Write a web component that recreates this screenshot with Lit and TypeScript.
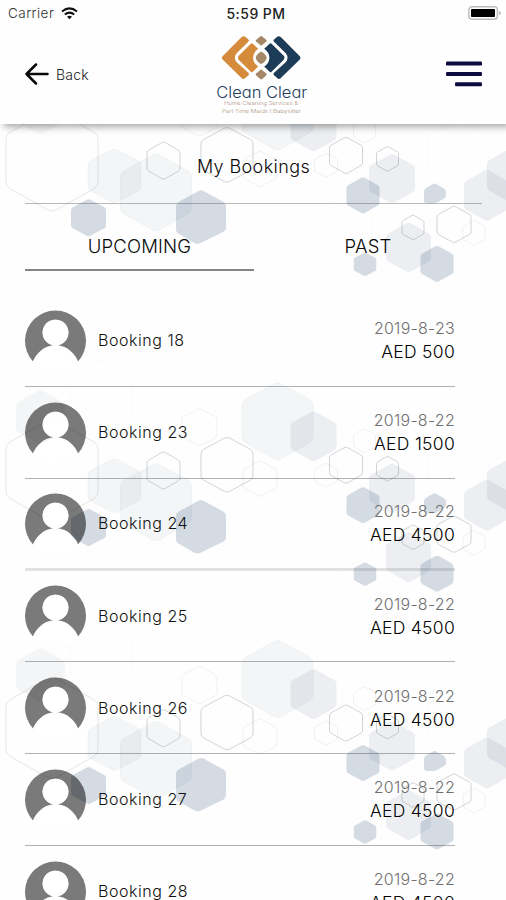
import { LitElement, html, css, svg } from "lit";
import { customElement } from "lit/decorators.js";

type Hex = [cx: number, cy: number, w: number, h: number, kind: string];

// One tile of the honeycomb backdrop: centre, size and tone of each cell.
const HEXES: Hex[] = [
  [40.5, 675, 49, 55, "pale"],
  [101, 655, 62, 76, "ghost"],
  [52, 728, 92, 104, "faint"],
  [114.5, 743.5, 53, 55, "light"],
  [156, 760, 71, 79, "light"],
  [163.5, 728.2, 33, 38, "line"],
  [88.5, 785.4, 35, 38, "dark"],
  [227, 722.5, 52, 56, "line"],
  [260, 736.5, 34, 36, "thin"],
  [199.5, 685, 35, 38, "thin"],
  [277.5, 679, 71, 79, "light"],
  [313.5, 694, 46, 51, "mid"],
  [346, 723, 33, 37, "line"],
  [326, 733, 23, 24, "thin"],
  [364.5, 698.5, 22, 24, "thin"],
  [392, 746, 46, 50, "mid"],
  [387.5, 726.5, 22, 25, "line"],
  [363, 763, 33, 37, "dark"],
  [487, 763, 46, 52, "mid"],
  [512, 743, 50, 56, "mid"],
  [454, 792, 34, 37, "line"],
  [474, 800.5, 22, 25, "thin"],
  [408.5, 815, 45, 51, "mid"],
  [413, 795, 22, 25, "line"],
  [365, 832, 22.5, 24, "dark"],
  [437, 831.5, 33, 37, "dark"],
  [342, 796, 60, 62, "ghost"],
  [458, 720, 60, 66, "ghost"],
];

function hexPath([cx, cy, w, h]: Hex): string {
  const pts = [
    [0, -0.5], [0.5, -0.25], [0.5, 0.25], [0, 0.5], [-0.5, 0.25], [-0.5, -0.25],
  ].map(([x, y]) => [cx + x * w, cy + y * h]);
  const t = 0.1;
  const mix = (a: number[], b: number[]) =>
    `${(a[0] + (b[0] - a[0]) * t).toFixed(1)} ${(a[1] + (b[1] - a[1]) * t).toFixed(1)}`;
  return pts
    .map((p, i) => {
      const prev = pts[(i + 5) % 6];
      const next = pts[(i + 1) % 6];
      return `${i ? "L" : "M"}${mix(p, prev)}Q${p[0]} ${p[1]} ${mix(p, next)}`;
    })
    .join("") + "Z";
}

@customElement("hex-backdrop")
export class HexBackdrop extends LitElement {
  static styles = css`
    :host { display: block; }
    svg { display: block; }
    .pale { fill: rgba(120, 130, 140, 0.07); }
    .light { fill: rgba(100, 128, 138, 0.07); stroke: rgba(100, 110, 120, 0.05); }
    .mid { fill: rgba(88, 112, 135, 0.11); }
    .dark { fill: rgba(62, 96, 130, 0.22); }
    .line { fill: none; stroke: rgba(60, 65, 75, 0.22); }
    .faint { fill: none; stroke: rgba(60, 65, 75, 0.13); }
    .thin { fill: none; stroke: rgba(60, 65, 75, 0.07); }
    .ghost { fill: none; stroke: rgba(60, 65, 75, 0.025); }
  `;
  render() {
    return html`<svg width="506" height="900" viewBox="0 0 506 900">
      ${[-567.6, -257.8, 0].map(
        (dy) => svg`<g transform="translate(0 ${dy})">
          ${HEXES.map((h) => svg`<path class=${h[4]} d=${hexPath(h)} />`)}
          <path class="dark" d="M426 755.5 Q424 757 424 759 V768 Q424 771 427 771 L433 771 Q435 771 437 770 L444 766 Q446 765 446 763 V760 Q446 757.5 444 756 L437 752 Q435 750.5 433 751.5 Z" />
          <path class="dark" d="M198.5 758.6 Q201 757.2 203.5 758.6 L223.5 769.6 Q226 771 226 774 V795 Q226 798 223.5 799.4 L201 810.4 Q197.5 812 194.5 810.6 L178.5 801.4 Q176 800 176 797 V774 Q176 771 178.5 769.6 Z" />
        </g>`
      )}
    </svg>`;
  }
}

@customElement("booking-row")
export class BookingRow extends LitElement {
  static properties = { name: {}, date: {}, price: {} };
  declare name: string;
  declare date: string;
  declare price: string;
  static styles = css`
    :host {
      display: flex;
      box-sizing: border-box;
      height: 91.8px;
      align-items: center;
      border-bottom: 1px solid rgba(70, 74, 80, 0.42);
    }
    :host([soft]) { height: 92.8px; margin-bottom: -1px; border-bottom: 3px solid rgba(90, 95, 100, 0.18); }
    svg { display: block; flex: none; }
    .ring { fill: #000; fill-opacity: 0.52; }
    .figure { fill: #fff; fill-opacity: 0.93; }
    .name { margin: 0 0 0 12px; font-size: 16px; letter-spacing: 0.55px; color: #111; font-weight: 300; flex: 1; }
    .side { display: flex; flex-direction: column; align-items: flex-end; line-height: 24px; font-weight: 300; }
    .date { font-size: 16px; color: #707070; letter-spacing: 0.25px; }
    .price { font-size: 17.5px; color: #000; letter-spacing: 0.3px; }
  `;
  render() {
    return html`
      <svg width="61" height="61" viewBox="0 0 61 61">
        <path class="ring" d="M8 51.5 A30.5 30.5 0 1 1 53 51.5 A25 25 0 0 0 33 35.3 A13 13 0 1 0 28 35.3 A25 25 0 0 0 8 51.5Z" />
        <circle class="figure" cx="30.5" cy="22.7" r="12.8" />
        <path class="figure" d="M8 51.5 A25 25 0 0 1 53 51.5 A30.5 30.5 0 0 1 8 51.5Z" />
      </svg>
      <span class="name">${this.name}</span>
      <span class="side">
        <span class="date">${this.date}</span>
        <span class="price">${this.price}</span>
      </span>
    `;
  }
}

const BOOKINGS = [
  { name: "Booking 18", date: "2019-8-23", price: "AED 500" },
  { name: "Booking 23", date: "2019-8-22", price: "AED 1500" },
  { name: "Booking 24", date: "2019-8-22", price: "AED 4500" },
  { name: "Booking 25", date: "2019-8-22", price: "AED 4500" },
  { name: "Booking 26", date: "2019-8-22", price: "AED 4500" },
  { name: "Booking 27", date: "2019-8-22", price: "AED 4500" },
  { name: "Booking 28", date: "2019-8-22", price: "AED 4500" },
];

@customElement("app-root")
export class AppRoot extends LitElement {
  static styles = css`
    :host {
      display: block;
      position: relative;
      width: 506px;
      height: 900px;
      overflow: hidden;
      background: #fefefe;
      font-family: Inter, Roboto, "Liberation Sans", sans-serif;
      color: #080808;
    }
    hex-backdrop { position: absolute; inset: 0; }
    svg { display: block; }
    .page { position: relative; display: flex; flex-direction: column; height: 900px; }
    .top {
      flex: none;
      height: 124px;
      background: #fefefe;
      box-shadow: 4px 3px 7px rgba(0, 0, 0, 0.34);
    }
    .status {
      display: grid;
      grid-template-columns: 1fr auto 1fr;
      align-items: center;
      height: 26px;
      padding: 0 5px 0 8px;
      font-size: 13.5px;
    }
    .carrier { display: flex; align-items: center; gap: 7px; color: #333; font-weight: 300; letter-spacing: 0.45px; }
    .clock { font-weight: 500; color: #222; font-size: 14px; letter-spacing: 0.45px; margin-left: 3px; }
    .battery { justify-self: end; }
    .bar {
      display: grid;
      grid-template-columns: 1fr auto 1fr;
      align-items: center;
      height: 96px;
      padding: 0 24px 0 25px;
    }
    .back { display: flex; align-items: center; gap: 7px; font-size: 14px; font-weight: 300; letter-spacing: 0.2px; color: #222; }
    .logo { margin: 3px 0 0 17px; }
    .menu { justify-self: end; }
    .brand { font-family: Inter, sans-serif; font-size: 15.5px; font-weight: 300; font-feature-settings: "cv11"; fill: #23405c; }
    .tag { font-family: Inter, sans-serif; font-size: 5.4px; font-weight: 300; fill: #a98e7c; }
    .orange { fill: #d58a3c; }
    .navy { fill: #1d3c57; }
    .tan { fill: #a48767; }
    .title {
      flex: none;
      margin: 0 24px 0 25px;
      height: 79px;
      line-height: 86px;
      text-align: center;
      font-size: 18px;
      font-weight: 300;
      letter-spacing: 0.4px;
      border-bottom: 1.5px solid rgba(70, 74, 80, 0.38);
      box-sizing: content-box;
    }
    .tabs { flex: none; display: grid; grid-template-columns: 229px 228px; margin-left: 25px; height: 67px; }
    .tab { text-align: center; font-size: 18.5px; font-weight: 300; letter-spacing: 0.2px; line-height: 85px; height: 65px; }
    .active { border-bottom: 2px solid #858585; }
    .list { flex: none; width: 430px; margin: 24px 0 0 25px; }
  `;

  render() {
    return html`
      <hex-backdrop></hex-backdrop>
      <div class="page">
        <header class="top">
          <div class="status">
            <span class="carrier">Carrier
              <svg width="17" height="13" viewBox="0 0 17 13" fill="none" stroke="#111" stroke-width="2">
                <path d="M1 4.6Q8.5-1.8 16 4.6" /><path d="M3.8 7.6Q8.5 3.6 13.2 7.6" />
                <path d="M6 9.8Q8.5 7.9 11 9.8L8.5 12.2Z" fill="#111" stroke="none" />
              </svg>
            </span>
            <span class="clock">5:59 PM</span>
            <svg class="battery" width="33" height="14" viewBox="0 0 33 14">
              <rect x="0.8" y="0.8" width="28.6" height="12.4" rx="3" fill="#fff" stroke="#bbb" stroke-width="1.4" />
              <rect x="3" y="3" width="24" height="8" rx="0.8" fill="#000" />
              <path d="M30.8 4.8Q33 5.5 33 7T30.8 9.2Z" fill="#bbb" />
            </svg>
          </div>
          <div class="bar">
            <span class="back">
              <svg width="24" height="22" viewBox="0 0 24 22" fill="none" stroke="#080808" stroke-width="2.5" stroke-linecap="round" stroke-linejoin="round">
                <path d="M22.5 11H1.5M11 1.5L1.5 11L11 20.5" />
              </svg>
              Back
            </span>
            <svg class="logo" width="94" height="82" viewBox="0 0 94 82">
              <g class="orange">
                <path d="M7.6 21.3L26.4 2.2Q28.6 .2 30.8 2.2L33.6 4.8Q34.4 5.6 33.6 6.4L21.4 18.4Q18.4 22.7 21.4 27L33.6 38Q34.4 39 33.6 40L30 43.2Q28.4 44.6 26.8 43.2L7.6 24.4Q6 22.8 7.6 21.3Z" />
                <path d="M23.9 20.5L35.8 8.8Q36.8 7.8 37.8 8.8L43.2 13.8Q38 17.5 38 22.7Q38 28 43.2 31.6L37.8 36.7Q36.8 37.7 35.8 36.7L23.9 25Q22 22.7 23.9 20.5Z" />
              </g>
              <g class="navy" transform="translate(92.4 0) scale(-1 1)">
                <path d="M7.6 21.3L26.4 2.2Q28.6 .2 30.8 2.2L33.6 4.8Q34.4 5.6 33.6 6.4L21.4 18.4Q18.4 22.7 21.4 27L33.6 38Q34.4 39 33.6 40L30 43.2Q28.4 44.6 26.8 43.2L7.6 24.4Q6 22.8 7.6 21.3Z" />
                <path d="M23.9 20.5L35.8 8.8Q36.8 7.8 37.8 8.8L43.2 13.8Q38 17.5 38 22.7Q38 28 43.2 31.6L37.8 36.7Q36.8 37.7 35.8 36.7L23.9 25Q22 22.7 23.9 20.5Z" />
              </g>
              <g class="tan">
                <path d="M45.2 1.4Q46.2 .6 47.2 1.4L51.4 5Q52 5.8 51.4 6.6Q48 9.2 46.2 10.8Q44.4 9.2 41 6.6Q40.4 5.8 41 5Z" />
                <path d="M46.2 16.6Q50.4 18.6 51.8 22.7Q50.4 27 46.2 29Q42 27 40.6 22.7Q42 18.6 46.2 16.6Z" />
                <path d="M46.2 34.2Q48.4 36.4 51.4 38.6Q52 39.4 51.4 40.2L47.2 44Q46.2 44.8 45.2 44L41 40.2Q40.4 39.4 41 38.6Q44 36.4 46.2 34.2Z" />
              </g>
              <text class="brand" x="1.3" y="62.5" textLength="91" lengthAdjust="spacingAndGlyphs">Clean Clear</text>
              <text class="tag" x="9" y="70.2" textLength="74" lengthAdjust="spacingAndGlyphs">Home Cleaning Services &amp;</text>
              <text class="tag" x="7" y="77.5" textLength="79" lengthAdjust="spacingAndGlyphs">Part Time Maids I Babysitter</text>
            </svg>
            <svg class="menu" width="36" height="26" viewBox="0 0 36 26" fill="#0b0b40">
              <rect width="36" height="4" rx="1.2" y=".5" /><rect y="11" width="36" height="4" rx="1.2" /><rect x="9" y="21.3" width="27" height="4" rx="1.2" />
            </svg>
          </div>
        </header>
        <div class="title">My Bookings</div>
        <nav class="tabs">
          <span class="tab active">UPCOMING</span>
          <span class="tab">PAST</span>
        </nav>
        <main class="list">
          ${BOOKINGS.map(
            (b, i) => html`<booking-row ?soft=${i === 2} .name=${b.name} .date=${b.date} .price=${b.price}></booking-row>`
          )}
        </main>
      </div>
    `;
  }
}
